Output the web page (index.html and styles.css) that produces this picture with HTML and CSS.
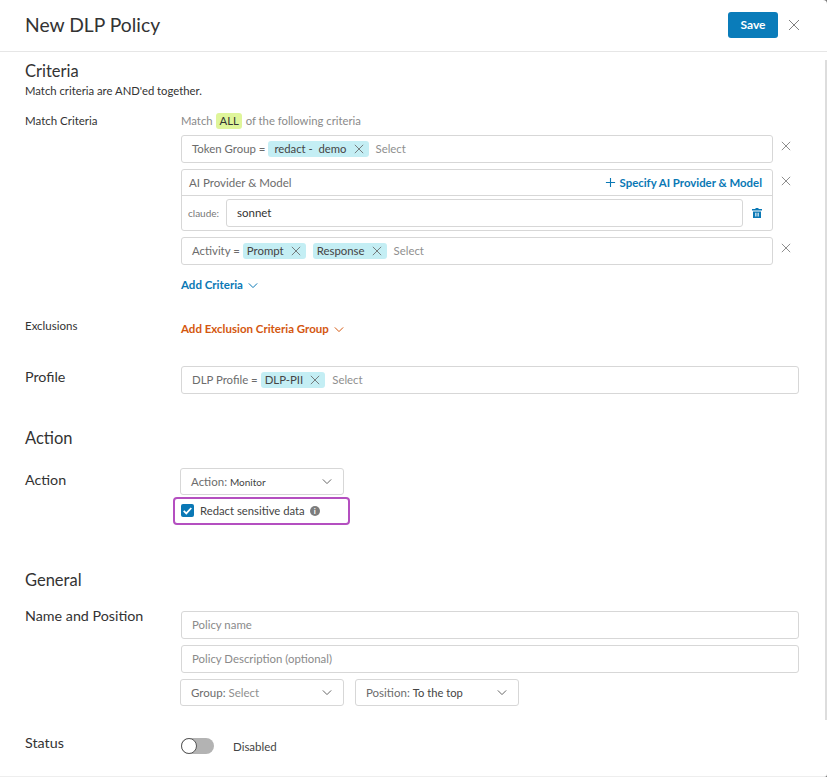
FILE: index.html
```html
<!DOCTYPE html>
<html lang="en">
<head>
    <meta charset="UTF-8">
    <meta name="viewport" content="width=device-width, initial-scale=1.0">
    <title>New DLP Policy</title>
    <link rel="stylesheet" href="styles.css">
</head>
<body>
    <svg class="defs" width="0" height="0">
        <symbol id="x" viewBox="0 0 12 12"><path d="M1 1l10 10M11 1L1 11" fill="none" stroke="currentColor" stroke-width="1"/></symbol>
        <symbol id="chev" viewBox="0 0 12 8"><path d="M1 1.5l5 5 5-5" fill="none" stroke="currentColor" stroke-width="1.2"/></symbol>
    </svg>

    <div class="header">
        <h1 class="title">New DLP Policy</h1>
        <button class="save">Save</button>
        <svg class="icon-x header-x"><use href="#x"/></svg>
    </div>

    <div class="content">
        <h2 class="heading">Criteria</h2>
        <p class="sub">Match criteria are AND'ed together.</p>

        <div class="row row-match">
            <div class="label">Match Criteria</div>
            <div class="col">
                <div class="match-line">Match <span class="all">ALL</span> of the following criteria</div>

                <div class="crit-row">
                    <div class="field">
                        <span class="key">Token Group =</span>
                        <span class="chip"><span class="redact">redact -&nbsp; demo</span><svg class="icon-x"><use href="#x"/></svg></span>
                        <span class="ph">Select</span>
                    </div>
                    <svg class="icon-x row-x"><use href="#x"/></svg>
                </div>

                <div class="crit-row">
                    <div class="ai-box">
                        <div class="ai-head">
                            <span class="ai-title">AI Provider &amp; Model</span>
                            <span class="specify">
                                <svg class="plus" viewBox="0 0 12 12"><path d="M6 1v10M1 6h10" fill="none" stroke="currentColor" stroke-width="1.2"/></svg>
                                Specify AI Provider &amp; Model
                            </span>
                        </div>
                        <div class="ai-body">
                            <span class="provider">claude:</span>
                            <div class="ai-input">sonnet</div>
                            <svg class="trash" viewBox="0 0 12 12"><path d="M4.5 1h3v1H11v1.4H1V2h3.5zM2 4.4h8V11H2zM4.3 5.8v3.8h1.1V5.8zm2.3 0v3.8h1.1V5.8z" fill="#0a78b5" fill-rule="evenodd"/></svg>
                        </div>
                    </div>
                    <svg class="icon-x row-x"><use href="#x"/></svg>
                </div>

                <div class="crit-row">
                    <div class="field">
                        <span class="key">Activity =</span>
                        <span class="chip">Prompt<svg class="icon-x"><use href="#x"/></svg></span>
                        <span class="chip">Response<svg class="icon-x"><use href="#x"/></svg></span>
                        <span class="ph">Select</span>
                    </div>
                    <svg class="icon-x row-x"><use href="#x"/></svg>
                </div>

                <div class="link add-criteria">Add Criteria <svg class="chev"><use href="#chev"/></svg></div>
            </div>
        </div>

        <div class="row row-excl">
            <div class="label">Exclusions</div>
            <div class="link orange">Add Exclusion Criteria Group <svg class="chev"><use href="#chev"/></svg></div>
        </div>

        <div class="row row-profile">
            <div class="label big">Profile</div>
            <div class="field wide">
                <span class="key">DLP Profile =</span>
                <span class="chip">DLP-PII<svg class="icon-x"><use href="#x"/></svg></span>
                <span class="ph">Select</span>
            </div>
        </div>

        <h2 class="heading h-action">Action</h2>

        <div class="row row-action">
            <div class="label big">Action</div>
            <div class="col">
                <div class="select action-select">
                    <span><span class="sel-key">Action:</span> <span class="small-val">Monitor</span></span>
                    <svg class="chev"><use href="#chev"/></svg>
                </div>
                <div class="redact-box">
                    <span class="check">
                        <svg viewBox="0 0 12 12"><path d="M2.5 6.3l2.4 2.4 4.6-5" fill="none" stroke="#fff" stroke-width="1.6"/></svg>
                    </span>
                    <span class="redact-text">Redact sensitive data</span>
                    <span class="info">i</span>
                </div>
            </div>
        </div>

        <h2 class="heading h-general">General</h2>

        <div class="row row-name">
            <div class="label big">Name and Position</div>
            <div class="col">
                <div class="field wide ph-field">Policy name</div>
                <div class="field wide ph-field desc">Policy Description (optional)</div>
                <div class="select-row">
                    <div class="select">
                        <span><span class="sel-key">Group:</span> <span class="ph-inline">Select</span></span>
                        <svg class="chev"><use href="#chev"/></svg>
                    </div>
                    <div class="select">
                        <span><span class="sel-key">Position:</span> <span class="sel-val">To the top</span></span>
                        <svg class="chev"><use href="#chev"/></svg>
                    </div>
                </div>
            </div>
        </div>

        <div class="row row-status">
            <div class="label big">Status</div>
            <div class="toggle"><span class="knob"></span></div>
            <span class="toggle-text">Disabled</span>
        </div>
    </div>

    <div class="scrollbar"></div>
</body>
</html>
```

FILE: styles.css
```css
* {
    margin: 0;
    padding: 0;
    box-sizing: border-box;
}
html {
    height: 100%;
    overflow: hidden;
    background: #777;
}
body {
    height: 100%;
    overflow: hidden;
    background: #fff;
    font-family: Lato, "Open Sans", sans-serif;
    font-size: 12px;
    color: #333;
    position: relative;
    border-bottom: 1px solid #eee;
    border-radius: 0 4px 3px 0;
}
.defs {
    position: absolute;
}

/* header */
.header {
    height: 52px;
    display: flex;
    align-items: center;
    padding: 0 27px 2px 25px;
    border-bottom: 1px solid #e6e6e6;
}
.title {
    font-size: 19.3px;
    font-weight: 400;
    color: #333;
    flex: 1;
    margin-top: -1px;
}
.save {
    width: 50px;
    height: 26px;
    background: #0a7cba;
    border: 0;
    border-radius: 3px;
    color: #fff;
    font-family: inherit;
    font-size: 12px;
    font-weight: 700;
}
.header .header-x {
    margin-left: 10px;
    width: 12px;
    height: 12px;
    color: #808080;
}

/* body */
.content {
    padding: 9px 28px 0 25px;
}
.heading {
    font-size: 16.5px;
    font-weight: 400;
    line-height: 20px;
    color: #333;
}
.sub {
    font-size: 11.3px;
    line-height: 16px;
    margin-top: 2px;
    color: #333;
}
.row {
    display: flex;
}
.label {
    width: 156px;
    flex-shrink: 0;
    font-size: 11.5px;
    line-height: 16px;
}
.label.big {
    font-size: 14.3px;
    line-height: 20px;
}
.col {
    flex: 1;
    min-width: 0;
    display: flex;
    flex-direction: column;
}
.row-match {
    margin-top: 14px;
}
.match-line {
    height: 16px;
    line-height: 16px;
    font-size: 11.3px;
    color: #8a8a8a;
    margin-bottom: 6px;
}
.all {
    display: inline-block;
    background: #dff59a;
    color: #333;
    font-weight: 400;
    padding: 0 3px;
    margin: 0 1px;
    border-radius: 3px;
}
.crit-row {
    display: flex;
    align-items: flex-start;
    margin-bottom: 6px;
}
.field {
    flex: none;
    width: 592px;
    height: 28px;
    border: 1px solid #d7d7d7;
    border-radius: 3px;
    display: flex;
    align-items: center;
    padding: 0 10px 1px;
    gap: 3px;
    font-size: 11.4px;
}
.field.wide {
    width: 618px;
}
.key {
    color: #6c6c6c;
}
.chip {
    display: inline-flex;
    align-items: center;
    height: 16px;
    padding: 0 5px 0 4px;
    background: #c4eef4;
    border-radius: 3px;
    color: #444;
    gap: 7px;
    margin-right: 4px;
}
.chip .icon-x {
    width: 10px;
    height: 10px;
    color: #666;
}
.redact {
    font-size: 11.3px;
    margin-left: 2px;
}
.ph {
    color: #8f8f8f;
}
.icon-x {
    width: 10px;
    height: 10px;
    display: block;
    flex-shrink: 0;
}
.row-x {
    margin: 6px 0 0 8px;
    color: #777;
}
.crit-row:nth-child(3) .row-x {
    margin-top: 7px;
}

.ai-box {
    width: 592px;
    height: 62px;
    border: 1px solid #d7d7d7;
    border-radius: 3px;
}
.ai-head {
    height: 26px;
    display: flex;
    align-items: center;
    justify-content: space-between;
    padding: 0 10px 0 7px;
    border-bottom: 1px solid #d7d7d7;
}
.ai-title {
    font-size: 11.5px;
    color: #6c6c6c;
}
.specify {
    display: flex;
    align-items: center;
    gap: 3px;
    color: #0a78b5;
    font-size: 11.4px;
    font-weight: 700;
}
.plus {
    width: 11px;
    height: 11px;
    margin-right: 1px;
}
.ai-body {
    display: flex;
    align-items: center;
    height: 34px;
    padding-left: 6px;
}
.provider {
    width: 38px;
    font-size: 10px;
    color: #777;
}
.ai-input {
    width: 517px;
    height: 28px;
    border: 1px solid #d7d7d7;
    border-radius: 3px;
    padding-left: 10px;
    line-height: 26px;
    font-size: 11.5px;
    color: #333;
}
.trash {
    width: 12px;
    height: 12px;
    margin-left: 8px;
}
.link {
    font-size: 11.5px;
    font-weight: 700;
    color: #0a78b5;
    line-height: 16px;
    display: flex;
    align-items: center;
}
.add-criteria {
    margin-top: 6px;
}
.chev {
    width: 10px;
    height: 7px;
    margin-left: 5px;
    display: block;
}
.orange {
    color: #d4570f;
}
.row-excl {
    margin-top: 28px;
}
.row-excl .label {
    margin-top: -3px;
}
.row-profile {
    margin-top: 29px;
    align-items: center;
}
.row-profile .label {
    margin-top: -6px;
}
.h-action {
    margin-top: 34px;
}
.row-action {
    margin-top: 20px;
}
.row-action .label {
    margin-top: 2px;
}

.select {
    width: 164px;
    height: 27px;
    margin-left: -1px;
    border: 1px solid #d7d7d7;
    border-radius: 3px;
    display: flex;
    align-items: center;
    justify-content: space-between;
    padding: 0 11px 1px 10px;
    font-size: 11.5px;
    color: #6c6c6c;
}
.select .chev {
    color: #666;
}
.small-val {
    font-size: 10px;
    color: #444;
}
.sel-val {
    font-size: 11.2px;
    color: #444;
}
.ph-inline {
    color: #8f8f8f;
}
.redact-box {
    width: 177px;
    height: 28px;
    margin: 2px 0 0 -8px;
    border: 2px solid #b44fc0;
    border-radius: 4px;
    display: flex;
    align-items: center;
    padding: 0 0 1px 6px;
}
.check {
    width: 13px;
    height: 13px;
    background: #0a78b5;
    border-radius: 2px;
    display: block;
}
.check svg {
    display: block;
}
.redact-text {
    margin-left: 6px;
    font-size: 11.3px;
    color: #444;
}
.info {
    width: 10px;
    height: 10px;
    margin-left: 5px;
    border-radius: 50%;
    background: #7d7d7d;
    color: #fff;
    font-size: 8px;
    font-weight: 700;
    line-height: 10px;
    text-align: center;
}
.h-general {
    margin-top: 45px;
}
.row-name {
    margin-top: 21px;
}
.row-name .label {
    margin-top: -5px;
}
.ph-field {
    color: #8a8a8a;
}
.desc {
    margin-top: 6px;
}
.select-row {
    display: flex;
    gap: 11px;
    margin-top: 6px;
}
.select-row .select + .select {
    margin-left: 0;
}
.row-status {
    margin-top: 32px;
    align-items: center;
}
.row-status .label {
    margin-top: -6px;
}
.toggle {
    width: 33px;
    height: 16px;
    background: #b3b3b3;
    border-radius: 8px;
    display: flex;
    align-items: center;
}
.knob {
    width: 16px;
    height: 16px;
    background: #fff;
    border: 1.5px solid #555;
    border-radius: 50%;
}
.toggle-text {
    margin-left: 19px;
    font-size: 11.5px;
    color: #444;
}
.scrollbar {
    position: absolute;
    top: 60px;
    right: 0;
    width: 2px;
    height: 660px;
    background: #ddd;
}
```
